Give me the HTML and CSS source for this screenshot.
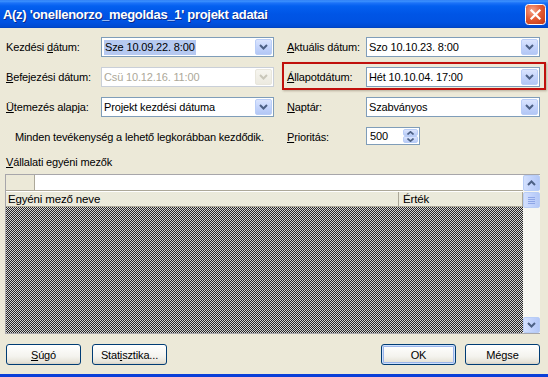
FILE: index.html
```html
<!DOCTYPE html>
<html lang="hu">
<head>
<meta charset="utf-8">
<title>Projekt adatai</title>
<link rel="stylesheet" href="styles.css">
</head>
<body>
<div class="window">
  <div class="titlebar">
    <span class="title">A(z) 'onellenorzo_megoldas_1' projekt adatai</span>
    <span class="close">
      <svg width="21" height="21" viewBox="0 0 21 21">
        <defs>
          <radialGradient id="cg" cx="0.35" cy="0.3" r="0.8">
            <stop offset="0" stop-color="#f6a58c"/>
            <stop offset="0.55" stop-color="#e25a33"/>
            <stop offset="1" stop-color="#c9401c"/>
          </radialGradient>
        </defs>
        <rect x="0.5" y="0.5" width="20" height="20" rx="3" fill="url(#cg)" stroke="#fff"/>
        <path d="M6.5 6.5L14.5 14.5M14.5 6.5L6.5 14.5" stroke="#fff" stroke-width="2.2" stroke-linecap="square"/>
      </svg>
    </span>
  </div>

  <div class="body">
    <div class="form">
      <span class="lbl">Kezdési <u>d</u>átum:</span>
      <div class="combo">
        <span class="val"><span class="sel">Sze 10.09.22. 8:00</span></span>
        <span class="drop"><svg width="9" height="6" viewBox="0 0 9 6"><path d="M1 1L4.5 4.5L8 1" fill="none" stroke="#4d6185" stroke-width="2"/></svg></span>
      </div>
      <span class="lbl r"><u>A</u>ktuális dátum:</span>
      <div class="combo">
        <span class="val">Szo 10.10.23. 8:00</span>
        <span class="drop"><svg width="9" height="6" viewBox="0 0 9 6"><path d="M1 1L4.5 4.5L8 1" fill="none" stroke="#4d6185" stroke-width="2"/></svg></span>
      </div>

      <span class="lbl"><u>B</u>efejezési dátum:</span>
      <div class="combo disabled">
        <span class="val">Csü 10.12.16. 11:00</span>
        <span class="drop"><svg width="9" height="6" viewBox="0 0 9 6"><path d="M1 1L4.5 4.5L8 1" fill="none" stroke="#c9c7ba" stroke-width="2"/></svg></span>
      </div>
      <div class="hl">
        <span class="lbl r"><u>Á</u>llapotdátum:</span>
        <div class="combo">
          <span class="val">Hét 10.10.04. 17:00</span>
          <span class="drop"><svg width="9" height="6" viewBox="0 0 9 6"><path d="M1 1L4.5 4.5L8 1" fill="none" stroke="#4d6185" stroke-width="2"/></svg></span>
        </div>
      </div>

      <span class="lbl"><u>Ü</u>temezés alapja:</span>
      <div class="combo">
        <span class="val">Projekt kezdési dátuma</span>
        <span class="drop"><svg width="9" height="6" viewBox="0 0 9 6"><path d="M1 1L4.5 4.5L8 1" fill="none" stroke="#4d6185" stroke-width="2"/></svg></span>
      </div>
      <span class="lbl r"><u>N</u>aptár:</span>
      <div class="combo">
        <span class="val">Szabványos</span>
        <span class="drop"><svg width="9" height="6" viewBox="0 0 9 6"><path d="M1 1L4.5 4.5L8 1" fill="none" stroke="#4d6185" stroke-width="2"/></svg></span>
      </div>

      <span class="note">Minden tevékenység a lehető legkorábban kezdődik.</span>
      <span class="lbl r"><u>P</u>rioritás:</span>
      <div class="spin">
        <span class="sval">500</span>
        <span class="sbtns">
          <span class="sb-half"><svg width="7" height="4" viewBox="0 0 7 4"><path d="M0.5 3.5L3.5 0.8L6.5 3.5" fill="none" stroke="#4d6185" stroke-width="1.6"/></svg></span>
          <span class="sb-half"><svg width="7" height="4" viewBox="0 0 7 4"><path d="M0.5 0.5L3.5 3.2L6.5 0.5" fill="none" stroke="#4d6185" stroke-width="1.6"/></svg></span>
        </span>
      </div>
    </div>

    <div class="section"><u>V</u>állalati egyéni mezők</div>

    <div class="table">
      <div class="main">
        <div class="entry"><span class="corner"></span><span class="edit"></span></div>
        <div class="head"><span class="hc1">Egyéni mező neve</span><span class="hc2">Érték</span></div>
        <div class="pattern"></div>
      </div>
      <div class="scroll">
        <span class="sbtn"><svg width="9" height="6" viewBox="0 0 9 6"><path d="M1 5L4.5 1.5L8 5" fill="none" stroke="#4d6185" stroke-width="2"/></svg></span>
        <span class="thumb"><svg width="7" height="7" viewBox="0 0 7 7"><path d="M0 0.5H7M0 2.5H7M0 4.5H7M0 6.5H7" stroke="#8ea6e6" stroke-width="1"/></svg></span>
        <span class="track"></span>
        <span class="sbtn"><svg width="9" height="6" viewBox="0 0 9 6"><path d="M1 1L4.5 4.5L8 1" fill="none" stroke="#4d6185" stroke-width="2"/></svg></span>
      </div>
    </div>

    <div class="buttons">
      <div class="group">
        <span class="btn"><u>S</u>úgó</span>
        <span class="btn">Stat<u>i</u>sztika...</span>
      </div>
      <div class="group g2">
        <span class="btn def">OK</span>
        <span class="btn">Mégse</span>
      </div>
    </div>
  </div>
</div>
</body>
</html>
```

FILE: styles.css
```css
* { box-sizing: border-box; }
html, body { margin: 0; padding: 0; }
body {
  width: 548px;
  height: 377px;
  overflow: hidden;
  background: #ece9d8;
  font-family: "Liberation Sans", Arial, sans-serif;
  font-size: 11px;
  letter-spacing: -0.15px;
  color: #000;
}
u { text-decoration: underline; text-underline-offset: 1px; }

.window {
  width: 548px;
  height: 377px;
  display: flex;
  flex-direction: column;
}

.titlebar {
  height: 28px;
  flex: none;
  display: flex;
  align-items: center;
  justify-content: space-between;
  padding: 0 2px 0 3px;
  color: #fff;
  background: linear-gradient(#2a78f2 0, #3f94ff 1px, #1c72f8 3px, #0460f0 6px, #0055e6 14px, #0052e2 22px, #0049d0 27px, #003fb8 28px);
}
.title {
  font-weight: bold;
  font-size: 13px;
  letter-spacing: -0.3px;
  text-shadow: 1px 1px 0 #0b2a8a;
}
.close { display: flex; width: 21px; height: 21px; }

.body {
  flex: 1;
  display: flex;
  flex-direction: column;
  padding: 9px 8px 0 5px;
  border-bottom: 3px solid #0a3fd8;
}

.form {
  display: grid;
  grid-template-columns: 96px 173px 92px 174px;
  grid-auto-rows: 20px;
  row-gap: 10px;
  align-items: center;
}
.lbl { white-space: nowrap; padding-left: 1px; }
.lbl.r { padding-left: 13px; }

.combo {
  height: 20px;
  border: 1px solid #7f9db9;
  background: #fff;
  display: flex;
}
.combo .val {
  flex: 1;
  display: flex;
  align-items: center;
  padding-left: 2px;
  white-space: nowrap;
  overflow: hidden;
}
.combo .sel { background: #b6c9f1; padding: 1px 1px 2px; }
.drop {
  width: 17px;
  margin: 1px;
  border: 1px solid #b9cdf7;
  border-radius: 2px;
  background: linear-gradient(#dbe5fe, #c4d4fb 50%, #b3c7f5);
  display: flex;
  align-items: center;
  justify-content: center;
}
.combo.disabled { border-color: #c9cfd8; }
.combo.disabled .val { color: #aca899; }
.combo.disabled .drop {
  border-color: #e8e6dc;
  background: linear-gradient(#f6f5ef, #eceae0);
}

.hl {
  grid-column: 3 / 5;
  display: grid;
  grid-template-columns: 92px 174px;
  align-items: center;
  position: relative;
}
.hl::after {
  content: "";
  position: absolute;
  left: 8px;
  right: -6px;
  top: -5px;
  bottom: -3px;
  border: 2px solid #c0100c;
  box-shadow: 1px 1px 2px rgba(80, 60, 40, 0.35);
  pointer-events: none;
}

.note { grid-column: 1 / 3; padding-left: 10px; white-space: nowrap; }

.spin {
  width: 54px;
  height: 18px;
  align-self: start;
  border: 1px solid #7f9db9;
  background: #fff;
  display: flex;
}
.sval { flex: 1; padding-left: 3px; display: flex; align-items: center; }
.sbtns { width: 16px; display: flex; flex-direction: column; padding: 1px 1px 1px 0; }
.sb-half {
  flex: 1;
  border: 1px solid #b9cdf7;
  border-radius: 2px;
  background: linear-gradient(#dbe5fe, #b8cbf6);
  display: flex;
  align-items: center;
  justify-content: center;
}

.section { margin-top: 9px; line-height: 13px; padding-left: 1px; }

.table {
  margin-top: 5px;
  height: 160px;
  width: 535px;
  display: grid;
  grid-template-columns: 1fr 17px;
  border: 1px solid #a7a6aa;
  border-right: none;
}
.main { display: flex; flex-direction: column; min-width: 0; }
.entry { height: 16px; display: flex; border-bottom: 1px solid #aca899; }
.corner { width: 29px; background: #ece9d8; border-right: 1px solid #aca899; }
.edit { flex: 1; background: #fff; }
.head {
  height: 16px;
  display: flex;
  background: #ebeadb;
  border-top: 1px solid #fff;
  border-bottom: 1px solid #aca899;
}
.hc1 { width: 392px; padding-left: 2px; display: flex; align-items: center; font-size: 11.5px; }
.hc2 { flex: 1; border-left: 1px solid #aca899; border-right: 1px solid #aca899; padding-left: 4px; display: flex; align-items: center; font-size: 11.5px; }
.pattern {
  flex: 1;
  background-color: #d4d4d4;
  background-image: url("data:image/svg+xml,%3Csvg xmlns='http://www.w3.org/2000/svg' width='2' height='2' shape-rendering='crispEdges'%3E%3Crect width='2' height='2' fill='%23d4d4d4'/%3E%3Crect width='1' height='1' fill='%23262626'/%3E%3Crect x='1' y='1' width='1' height='1' fill='%23262626'/%3E%3C/svg%3E");
  background-size: 2px 2px;
  background-repeat: repeat;
  image-rendering: pixelated;
}

.scroll {
  display: flex;
  flex-direction: column;
  background: #f6f6f1;
}
.sbtn, .thumb {
  height: 16px;
  flex: none;
  border: 1px solid #b8cdf6;
  border-radius: 2px;
  background: linear-gradient(90deg, #d3e0fd, #c2d3fc 50%, #b4c8f6);
  display: flex;
  align-items: center;
  justify-content: center;
}
.thumb { margin-top: 1px; }
.track { flex: 1; }

.buttons {
  margin-top: 10px;
  display: flex;
  justify-content: space-between;
  padding-left: 1px;
}
.group { display: flex; gap: 11px; }
.group.g2 { gap: 9px; }
.btn {
  width: 75px;
  height: 21px;
  border: 1px solid #003c74;
  border-radius: 3px;
  background: linear-gradient(#ffffff, #f4f3ee 60%, #e6e3d8 90%, #d6d0c5);
  display: flex;
  align-items: center;
  justify-content: center;
  white-space: nowrap;
}
.btn.def { box-shadow: inset 0 0 0 1px #cee0fc, inset 0 0 0 2px #9ab5ea; }
```
